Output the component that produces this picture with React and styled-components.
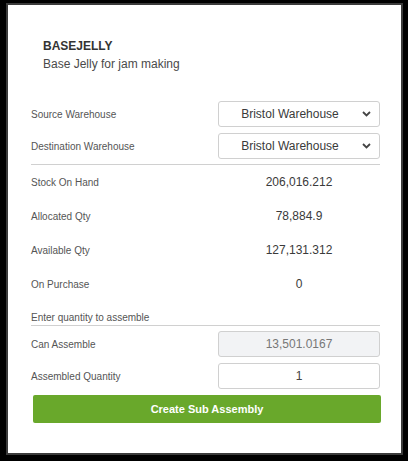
import React from "react";
import styled, { createGlobalStyle } from "styled-components";

const Global = createGlobalStyle`
  html, body {
    margin: 0;
    background: #000;
  }
  body {
    font-family: "Liberation Sans", Arial, sans-serif;
    color: #333;
  }
`;

const Panel = styled.div`
  box-sizing: border-box;
  margin: 3px 5px 0 6px;
  width: 397px;
  height: 452px;
  border: 2px solid #3b3b3b;
  background: #fff;
  padding: 33px 21px 0 23px;
`;

const Header = styled.div`
  padding-left: 12px;
  margin-bottom: 29px;
`;

const Title = styled.div`
  font-size: 12px;
  font-weight: bold;
  line-height: 16px;
  color: #333;
`;

const Subtitle = styled.div`
  font-size: 12px;
  line-height: 16px;
  margin-top: 2px;
  color: #4a4a4a;
`;

const Row = styled.div`
  display: grid;
  grid-template-columns: 1fr 162px;
  align-items: center;
  height: ${(p) => p.$h || 26}px;
  margin-top: ${(p) => p.$gap || 0}px;
`;

const Label = styled.div`
  font-size: 10px;
  color: #555;
`;

const Value = styled.div`
  font-size: 12px;
  text-align: center;
  color: #3a3a3a;
`;

const SelectWrap = styled.div`
  position: relative;
  height: 100%;
`;

const Select = styled.select`
  box-sizing: border-box;
  width: 100%;
  height: 100%;
  appearance: none;
  border: 1px solid #d0d0d0;
  border-radius: 3px;
  background: #fff;
  font-family: "Liberation Sans", Arial, sans-serif;
  font-size: 12px;
  color: #3a3a3a;
  padding: 0 22px 0 4px;
  text-align-last: center;
  outline: none;
`;

const Chevron = styled.svg`
  position: absolute;
  right: 9px;
  top: 50%;
  margin-top: -3px;
  pointer-events: none;
`;

const Input = styled.input`
  box-sizing: border-box;
  width: 100%;
  height: 100%;
  border: 1px solid #d0d0d0;
  border-radius: 3px;
  background: ${(p) => (p.disabled ? "#f2f3f5" : "#fff")};
  font-family: "Liberation Sans", Arial, sans-serif;
  font-size: 12px;
  color: ${(p) => (p.disabled ? "#777" : "#444")};
  text-align: center;
  outline: none;
`;

const Divider = styled.div`
  border-bottom: 1px solid #d0d0d0;
  margin-top: ${(p) => p.$gap || 0}px;
`;

const SectionLabel = styled(Label)`
  margin-top: 10px;
  line-height: 14px;
  border-bottom: 1px solid #d0d0d0;
`;

const Button = styled.button`
  display: block;
  box-sizing: border-box;
  width: 348px;
  height: 28px;
  margin: 6px 0 0 2px;
  border: none;
  border-radius: 2px;
  background: #69a82b;
  color: #fff;
  font-family: "Liberation Sans", Arial, sans-serif;
  font-size: 11px;
  font-weight: bold;
`;

const WarehouseSelect = () => (
  <SelectWrap>
    <Select defaultValue="bristol">
      <option value="bristol">Bristol Warehouse</option>
    </Select>
    <Chevron width="9" height="6" viewBox="0 0 9 6">
      <polyline
        points="1,1 4.5,4.5 8,1"
        fill="none"
        stroke="#444"
        strokeWidth="1.8"
      />
    </Chevron>
  </SelectWrap>
);

const stats = [
  ["Stock On Hand", "206,016.212"],
  ["Allocated Qty", "78,884.9"],
  ["Available Qty", "127,131.312"],
  ["On Purchase", "0"],
];

const App = () => {
  return (
    <>
      <Global />
      <Panel>
        <Header>
          <Title>BASEJELLY</Title>
          <Subtitle>Base Jelly for jam making</Subtitle>
        </Header>

        <Row>
          <Label>Source Warehouse</Label>
          <WarehouseSelect />
        </Row>
        <Row $gap={6}>
          <Label>Destination Warehouse</Label>
          <WarehouseSelect />
        </Row>
        <Divider $gap={5} />

        {stats.map(([label, value]) => (
          <Row key={label} $h={34}>
            <Label>{label}</Label>
            <Value>{value}</Value>
          </Row>
        ))}

        <SectionLabel>Enter quantity to assemble</SectionLabel>

        <Row $gap={5}>
          <Label>Can Assemble</Label>
          <Input disabled value="13,501.0167" readOnly />
        </Row>
        <Row $gap={6}>
          <Label>Assembled Quantity</Label>
          <Input defaultValue="1" />
        </Row>

        <Button type="button">Create Sub Assembly</Button>
      </Panel>
    </>
  );
};

export default App;
